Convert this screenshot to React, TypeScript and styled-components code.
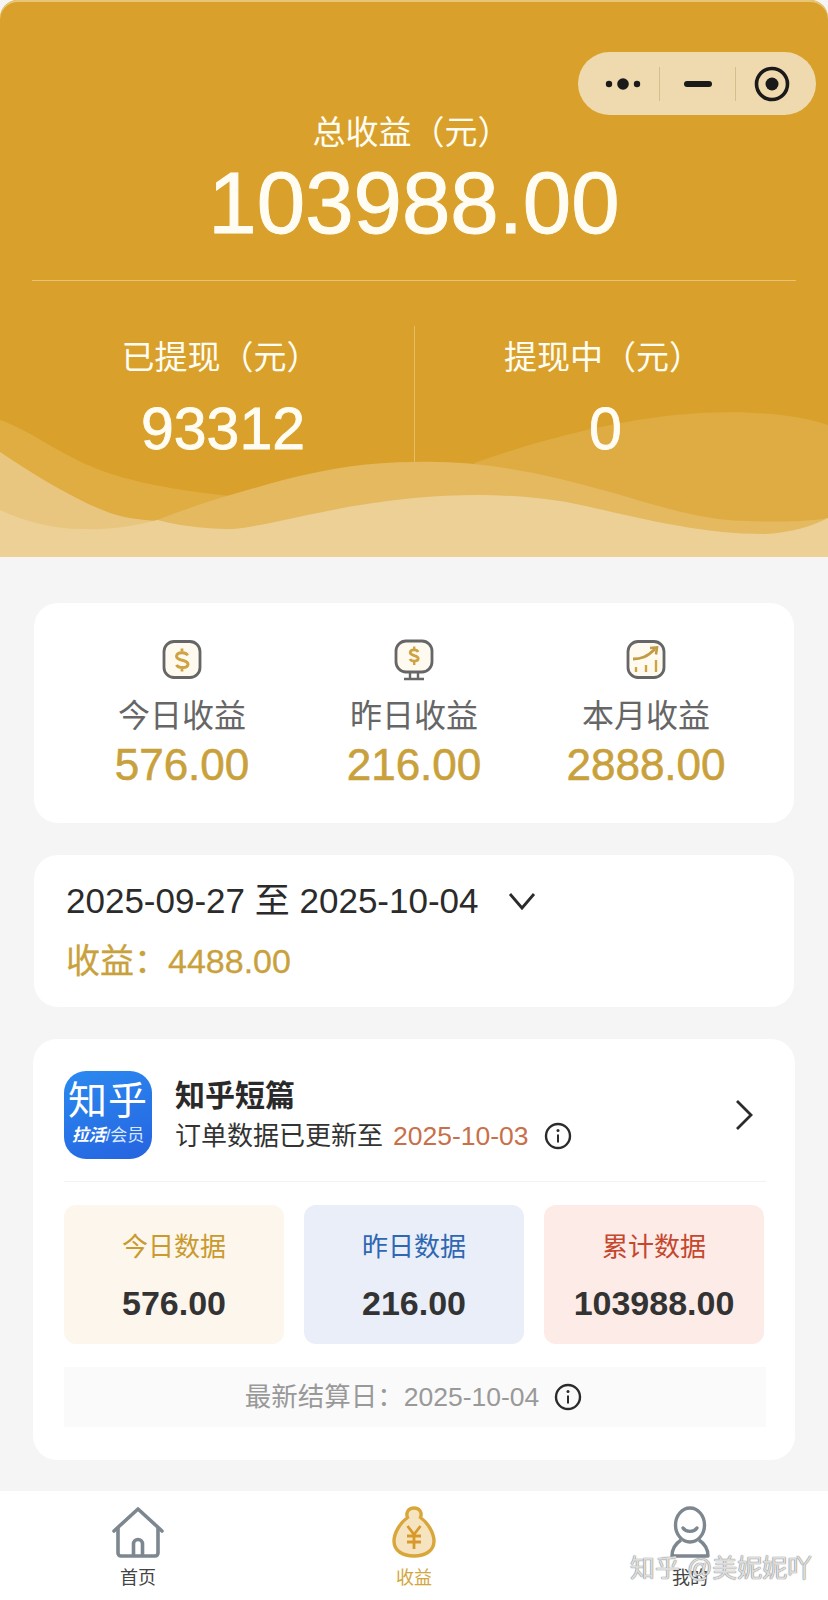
import React from 'react';
import styled, { createGlobalStyle } from 'styled-components';

const GlobalStyle = createGlobalStyle`
  html, body {
    margin: 0;
    padding: 0;
    background: #f5f5f5;
  }
  body {
    font-family: "Liberation Sans", "Noto Sans CJK SC", sans-serif;
  }
  * {
    box-sizing: border-box;
  }
`;

const Page = styled.div`
  width: 828px;
  height: 1600px;
  display: flex;
  flex-direction: column;
  overflow: hidden;
  position: relative;
  background: #f5f5f5;
`;

const Hero = styled.header`
  position: relative;
  height: 557px;
  flex-shrink: 0;
  padding: 111px 32px 0;
  background: #d9a12b;
  border-radius: 18px 18px 0 0;
  box-shadow: inset 0 2px 0 #e8c676;
  overflow: hidden;
  color: #fffdf3;
  text-align: center;
`;

const Waves = styled.svg`
  position: absolute;
  left: 0;
  bottom: 0;
  width: 828px;
  height: 157px;
`;

const HeroContent = styled.div`
  position: relative;
`;

const HeroLabel = styled.div`
  padding-right: 5px;
  font-size: 33px;
  line-height: 44px;
`;

const HeroTotal = styled.div`
  font-size: 87px;
  line-height: 90px;
  margin-top: 3px;
  padding-bottom: 32px;
  border-bottom: 1px solid #e9c272;
  -webkit-text-stroke: 1px #fffdf3;
`;

const HeroRow = styled.div`
  display: grid;
  grid-template-columns: 1fr 1fr;
  margin-top: 45px;
  height: 135px;
`;

const HeroCell = styled.div`
  padding-top: 10px;
  & + & {
    border-left: 1px solid #e6bc66;
  }
`;

const HeroValue = styled.div`
  font-size: 59px;
  line-height: 66px;
  margin-top: 16px;
  -webkit-text-stroke: 0.8px #fffdf3;
`;

const Capsule = styled.div`
  position: absolute;
  top: 52px;
  left: 578px;
  width: 238px;
  height: 63px;
  border-radius: 32px;
  background: #efd9ae;
  display: grid;
  grid-template-columns: 81px 76px 81px;
  align-items: center;
  justify-items: center;
`;

const CapsuleCell = styled.div`
  height: 34px;
  width: 100%;
  display: flex;
  align-items: center;
  justify-content: center;
  &:first-child {
    padding-left: 9px;
  }
  &:last-child {
    padding-right: 9px;
  }
  & + & {
    border-left: 1px solid #d6bd8c;
  }
`;

const Main = styled.main`
  flex: 1;
  display: flex;
  flex-direction: column;
  gap: 32px;
  padding: 46px 34px 0;
`;

const Card = styled.section`
  background: #fff;
  border-radius: 24px;
`;

const SummaryCard = styled(Card)`
  height: 220px;
  display: grid;
  grid-template-columns: repeat(3, 232px);
  padding: 36px 32px 0;
`;

const SummaryItem = styled.div`
  display: flex;
  flex-direction: column;
  align-items: center;
`;

const SummaryIcon = styled.svg`
  width: 42px;
  height: 42px;
`;

const SummaryLabel = styled.div`
  margin-top: 13px;
  font-size: 32px;
  line-height: 44px;
  color: #666;
`;

const SummaryValue = styled.div`
  font-size: 44px;
  line-height: 54px;
  color: #c9a13c;
  -webkit-text-stroke: 0.6px #c9a13c;
`;

const RangeCard = styled(Card)`
  height: 152px;
  padding: 24px 32px 0;
`;

const RangeRow = styled.div`
  display: flex;
  align-items: center;
  font-size: 35px;
  line-height: 44px;
  color: #2b2b2b;
`;

const RangeChevron = styled.svg`
  width: 30px;
  height: 22px;
  margin-left: 28px;
`;

const RangeIncome = styled.div`
  margin-top: 16px;
  font-size: 34px;
  line-height: 44px;
  color: #c9a13c;
  -webkit-text-stroke: 0.3px #c9a13c;
`;

const ProductCard = styled(Card)`
  height: 421px;
  margin: 0 -1px;
  padding: 32px 31px 0;
`;

const ProductHead = styled.div`
  display: flex;
  align-items: center;
  height: 111px;
  padding-bottom: 22px;
  margin-right: -2px;
  border-bottom: 1px solid #f2f2f2;
`;

const Logo = styled.div`
  width: 88px;
  height: 88px;
  flex-shrink: 0;
  border-radius: 22px;
  background: linear-gradient(160deg, #2b8af0, #2563e0);
  color: #fff;
  display: flex;
  flex-direction: column;
  align-items: center;
  padding-top: 7px;
`;

const LogoName = styled.div`
  font-size: 39px;
  line-height: 46px;
  letter-spacing: 1px;
`;

const LogoTag = styled.div`
  margin-top: 2px;
  font-size: 17px;
  line-height: 20px;
  white-space: nowrap;
  color: #dbe8ff;
  & > b {
    color: #fff;
    font-style: italic;
  }
`;

const ProductText = styled.div`
  flex: 1;
  margin-left: 23px;
`;

const ProductName = styled.div`
  font-size: 30px;
  line-height: 40px;
  font-weight: 700;
  color: #2a2a2a;
`;

const ProductSub = styled.div`
  display: flex;
  align-items: center;
  margin-top: 2px;
  font-size: 26px;
  line-height: 36px;
  color: #333;
`;

const UpdateDate = styled.span`
  margin-left: 10px;
  font-size: 26.5px;
  color: #c8704a;
`;

const InfoIcon = styled.svg`
  width: 28px;
  height: 28px;
  margin-left: 15px;
`;

const ArrowIcon = styled.svg`
  width: 20px;
  height: 32px;
  margin-right: 12px;
`;

const Tiles = styled.div`
  display: grid;
  grid-template-columns: repeat(3, 220px);
  gap: 20px;
  margin-top: 23px;
`;

const Tile = styled.div<{ $bg: string; $fg: string }>`
  height: 139px;
  border-radius: 12px;
  background: ${(p) => p.$bg};
  text-align: center;
  padding-top: 24px;
  & > span {
    display: block;
    font-size: 26px;
    line-height: 36px;
    color: ${(p) => p.$fg};
  }
  & > strong {
    display: block;
    margin-top: 18px;
    font-size: 34px;
    line-height: 40px;
    color: #333;
  }
`;

const Settlement = styled.div`
  display: flex;
  align-items: center;
  justify-content: center;
  height: 60px;
  margin: 23px -2px 0 0;
  padding-right: 3px;
  background: #fafafa;
  font-size: 26.5px;
  line-height: 36px;
  color: #999;
`;

const TabBar = styled.nav`
  height: 109px;
  flex-shrink: 0;
  background: #fff;
  display: grid;
  grid-template-columns: repeat(3, 276px);
`;

const Tab = styled.div<{ $active?: boolean }>`
  display: flex;
  flex-direction: column;
  align-items: center;
  padding-top: 15px;
  font-size: 18px;
  line-height: 24px;
  color: ${(p) => (p.$active ? '#d3a53c' : '#444')};
`;

const TabIcon = styled.svg`
  width: 56px;
  height: 52px;
  margin-bottom: 8px;
`;

const Watermark = styled.div`
  position: absolute;
  left: 630px;
  top: 1553px;
  font-size: 25px;
  line-height: 30px;
  white-space: nowrap;
  color: rgba(255, 255, 255, 0.75);
  text-shadow: 0 0 1px #777, 0 0 1px #777;
`;

const Info = () => (
  <InfoIcon viewBox="0 0 28 28" fill="none">
    <circle cx="14" cy="14" r="12" stroke="#2b2b2b" strokeWidth="2.4" />
    <circle cx="14" cy="8.6" r="1.5" fill="#2b2b2b" />
    <path d="M14 12.5v8" stroke="#2b2b2b" strokeWidth="2" />
  </InfoIcon>
);

const summary = [
  { label: '今日收益', value: '576.00', icon: 'coin' },
  { label: '昨日收益', value: '216.00', icon: 'screen' },
  { label: '本月收益', value: '2888.00', icon: 'chart' },
];

const tiles = [
  { label: '今日数据', value: '576.00', bg: '#fdf6ec', fg: '#c99a2e' },
  { label: '昨日数据', value: '216.00', bg: '#e9eef9', fg: '#2f67b2' },
  { label: '累计数据', value: '103988.00', bg: '#fdebe7', fg: '#c5472e' },
];

const SummaryGlyph = ({ kind }: { kind: string }) => {
  const gold = '#cfa243';
  const frame = '#666';
  if (kind === 'screen') {
    return (
      <SummaryIcon viewBox="0 0 42 42" fill="none">
        <rect x="3" y="2" width="36" height="31" rx="10" fill="#fffaf0" stroke={frame} strokeWidth="2.8" />
        <path d="M17 33v6M25 33v6M11 40h20" stroke={frame} strokeWidth="2.4" />
        <path d="M25 13c-.8-2.600-7.500-3-7.800.6 0 3.900 8 2.200 8 6 0 3.400-7 3-8.200.4" stroke={gold} strokeWidth="2.800" />
        <path d="M21.200 7.500v3M21.200 23v3" stroke={gold} strokeWidth="2.400" />
      </SummaryIcon>
    );
  }
  if (kind === 'chart') {
    return (
      <SummaryIcon viewBox="0 0 42 42" fill="none">
        <rect x="3" y="2.500" width="36" height="36" rx="10" fill="#fffaf0" stroke={frame} strokeWidth="2.800" />
        <path d="M8 20c8 0 14-2 22-10" stroke="#c39a45" strokeWidth="2.800" />
        <path d="M25 9l7-.5-1 7" stroke="#c39a45" strokeWidth="2.600" />
        <path d="M11 28v5M21 26v7M31 21v12" stroke={gold} strokeWidth="2.400" />
      </SummaryIcon>
    );
  }
  return (
    <SummaryIcon viewBox="0 0 42 42" fill="none">
      <rect x="3" y="2.500" width="36" height="36" rx="10" fill="#fffaf0" stroke={frame} strokeWidth="2.800" />
      <path d="M26.500 16.500c-1-3.600-10.500-4-11 .8 0 5 11.500 3 11.500 8 0 4.500-10 4-11.500 .6" stroke={gold} strokeWidth="3" />
      <path d="M21 9.500v3M21 29.500v3" stroke={gold} strokeWidth="2.800" />
    </SummaryIcon>
  );
};

const App: React.FC = () => {
  return (
    <Page>
      <GlobalStyle />
      <Hero>
        <Waves viewBox="0 0 828 157">
          <path fill="#dfac44" d="M474 63C540 40 620 18 700 13 750 10 800 15 828 25V157H474Z" />
          <path fill="#e0ad42" d="M0 20C30 30 60 55 100 70 140 85 190 92 240 97L157 157H0Z" />
          <path fill="#e9c680" d="M0 52C30 72 70 98 110 113 125 118 140 120 157 121V157H0Z" />
          <path fill="#e4b960" d="M157 120C200 103 240 92 283 80 330 68 370 62 414 62 480 60 540 72 614 93 670 110 710 121 747 121 780 122 805 122 828 118V157H157Z" />
          <path fill="#ecd096" d="M0 110C25 122 55 129 83 129 110 130 135 126 157 120 170 123 195 129 233 129 280 124 330 106 414 98 470 93 530 94 581 105 640 118 700 134 764 134 790 133 810 127 828 118V157H0Z" />
        </Waves>
        <HeroContent>
          <HeroLabel>总收益（元）</HeroLabel>
          <HeroTotal>103988.00</HeroTotal>
          <HeroRow>
            <HeroCell>
              <HeroLabel>已提现（元）</HeroLabel>
              <HeroValue>93312</HeroValue>
            </HeroCell>
            <HeroCell>
              <HeroLabel>提现中（元）</HeroLabel>
              <HeroValue>0</HeroValue>
            </HeroCell>
          </HeroRow>
        </HeroContent>
        <Capsule>
          <CapsuleCell>
            <svg width="40" height="14" viewBox="0 0 40 14" fill="#1a1a1a">
              <circle cx="6" cy="7" r="3.200" />
              <circle cx="20" cy="7" r="5.800" />
              <circle cx="34" cy="7" r="3.200" />
            </svg>
          </CapsuleCell>
          <CapsuleCell>
            <svg width="28" height="6" viewBox="0 0 28 6" fill="#1a1a1a">
              <rect width="28" height="6" rx="3" />
            </svg>
          </CapsuleCell>
          <CapsuleCell>
            <svg width="36" height="36" viewBox="0 0 36 36" fill="none">
              <circle cx="18" cy="18" r="15.500" stroke="#1a1a1a" strokeWidth="3.600" />
              <circle cx="18" cy="18" r="6.500" fill="#1a1a1a" />
            </svg>
          </CapsuleCell>
        </Capsule>
      </Hero>

      <Main>
        <SummaryCard>
          {summary.map((item) => (
            <SummaryItem key={item.label}>
              <SummaryGlyph kind={item.icon} />
              <SummaryLabel>{item.label}</SummaryLabel>
              <SummaryValue>{item.value}</SummaryValue>
            </SummaryItem>
          ))}
        </SummaryCard>

        <RangeCard>
          <RangeRow>
            2025-09-27 至 2025-10-04
            <RangeChevron viewBox="0 0 30 22" fill="none">
              <path d="M3 4l12 14L27 4" stroke="#2b2b2b" strokeWidth="2.800" />
            </RangeChevron>
          </RangeRow>
          <RangeIncome>收益：4488.00</RangeIncome>
        </RangeCard>

        <ProductCard>
          <ProductHead>
            <Logo>
              <LogoName>知乎</LogoName>
              <LogoTag>
                <b>拉活</b>/会员
              </LogoTag>
            </Logo>
            <ProductText>
              <ProductName>知乎短篇</ProductName>
              <ProductSub>
                订单数据已更新至
                <UpdateDate>2025-10-03</UpdateDate>
                <Info />
              </ProductSub>
            </ProductText>
            <ArrowIcon viewBox="0 0 20 32" fill="none">
              <path d="M3 2l14 14L3 30" stroke="#2b2b2b" strokeWidth="2.800" />
            </ArrowIcon>
          </ProductHead>
          <Tiles>
            {tiles.map((tile) => (
              <Tile key={tile.label} $bg={tile.bg} $fg={tile.fg}>
                <span>{tile.label}</span>
                <strong>{tile.value}</strong>
              </Tile>
            ))}
          </Tiles>
          <Settlement>
            最新结算日：2025-10-04
            <Info />
          </Settlement>
        </ProductCard>
      </Main>

      <TabBar>
        <Tab>
          <TabIcon viewBox="0 0 56 52" fill="none" stroke="#7d8790" strokeWidth="3.600" strokeLinejoin="round">
            <path d="M4 25L28 3l24 22" strokeLinecap="round" />
            <path d="M8 22v25a3 3 0 0 0 3 3h34a3 3 0 0 0 3-3V22" />
            <path d="M23.500 50V38a4.500 4.500 0 0 1 9 0v12" />
          </TabIcon>
          首页
        </Tab>
        <Tab $active>
          <TabIcon viewBox="0 0 56 52">
            <path d="M28 2c-5.500 0-8.500 4.500-6.500 9.500C14 17 8 27 8 35c0 10 9 15 20 15s20-5 20-15c0-8-6-18-13.500-23.500C36.500 6.500 33.500 2 28 2Z" fill="#f6e4c0" stroke="#d9a63a" strokeWidth="3.400" />
            <path d="M21.500 20l6.500 8.500 6.500-8.500M21 30h14M21 36h14M28 28.500V43" fill="none" stroke="#d9992a" strokeWidth="2.800" />
          </TabIcon>
          收益
        </Tab>
        <Tab>
          <TabIcon viewBox="0 0 56 52" fill="none" stroke="#7d8790" strokeWidth="3.400">
            <ellipse cx="28" cy="19" rx="14.500" ry="17" />
            <path d="M21 22c3 4.500 11 4.500 14 0" strokeLinecap="round" />
            <path d="M19 34C13 38 10 44 10 50h36c0-6-3-12-9-16" strokeLinejoin="round" />
          </TabIcon>
          我的
        </Tab>
      </TabBar>
      <Watermark>知乎 @美妮妮吖</Watermark>
    </Page>
  );
};

export default App;
